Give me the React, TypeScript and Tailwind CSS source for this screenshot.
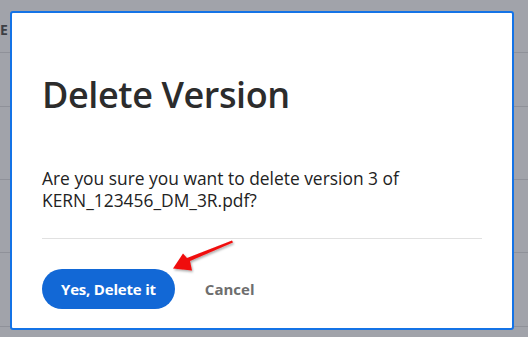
export default function App() {
  const rows = [53, 54, 73, 73, 74];

  return (
    <div className="relative h-[337px] w-[528px] overflow-hidden bg-[#a1a3aa] font-['Open_Sans',sans-serif]">
      {/* page behind the modal */}
      <div className="flex flex-col">
        {rows.map((h, i) => (
          <div key={i} className="relative border-b border-[#8f9199]" style={{ height: h }}>
            {i === 0 && (
              <span className="absolute left-0 top-[20px] text-[14px] font-bold leading-[20px] text-[#3d3f44]">E</span>
            )}
          </div>
        ))}
      </div>

      {/* Modal */}
      <div className="absolute left-[10px] top-[11px] flex h-[319px] w-[504px] flex-col rounded-[3px] border-2 border-[#1473e6] bg-white px-[30px]">
        <h1 className="mt-[60px] text-[36px] font-semibold leading-[44px] tracking-[-0.4px] text-[#2c2c2c]">Delete Version</h1>

        <p className="mt-[50px] text-[17.4px] leading-[22px] text-[#222]">
          Are you sure you want to delete version 3 of
          <br />
          KERN_123456_DM_3R.pdf?
        </p>

        <div className="mt-[27px] h-px w-[440px] bg-[#e1e1e1]" />

        <div className="mt-[30px] flex items-center gap-[30px]">
          <button className="h-[40px] rounded-full bg-[#1268d6] px-[19px] text-[15px] font-bold tracking-[-0.2px] text-white">
            Yes, Delete it
          </button>
          <button className="text-[15px] font-bold text-[#6e6e6e]">Cancel</button>
        </div>
      </div>

      {/* Red annotation arrow */}
      <svg className="absolute left-0 top-0" width="528" height="337" viewBox="0 0 528 337">
        <defs>
          <filter id="sh" x="-20%" y="-20%" width="140%" height="140%">
            <feDropShadow dx="1" dy="1.5" stdDeviation="1" floodColor="#000" floodOpacity="0.35" />
          </filter>
        </defs>
        <polygon
          points="232,240.5 233,242.5 190,261 192,270.5 173,268.5 183,253.5 187,258"
          fill="#f00d0d"
          filter="url(#sh)"
        />
      </svg>
    </div>
  );
}
